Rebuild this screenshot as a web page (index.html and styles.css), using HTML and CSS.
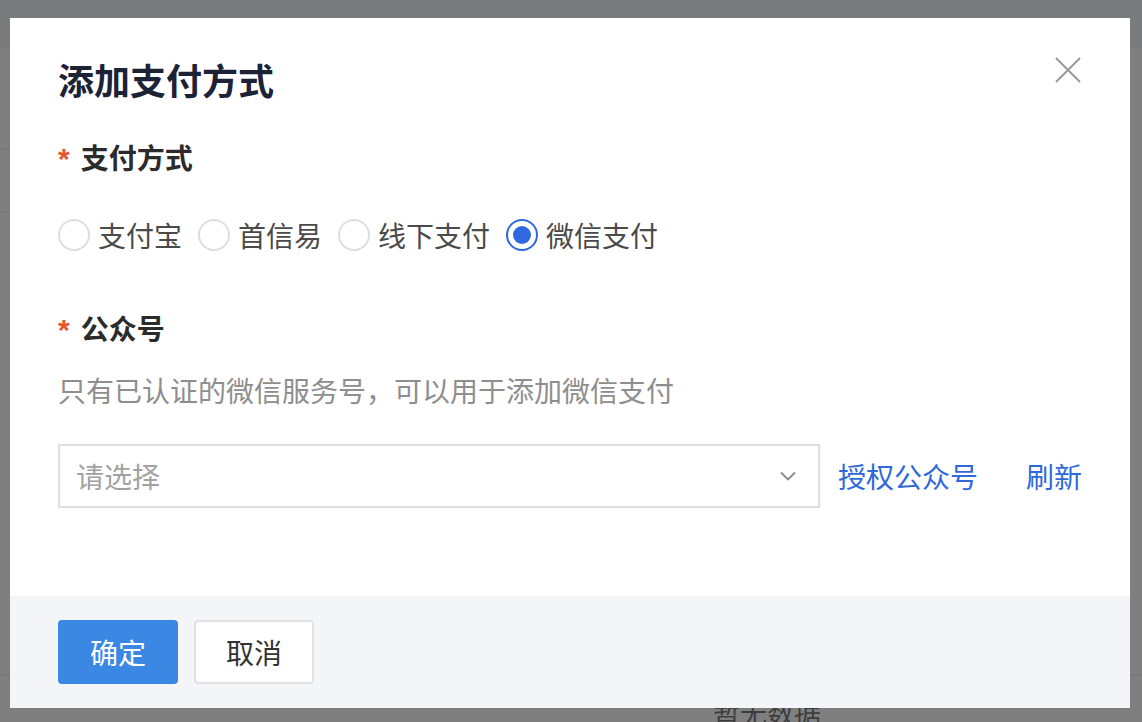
FILE: index.html
```html
<!DOCTYPE html>
<html lang="zh-CN">
<head>
<meta charset="utf-8">
<title>添加支付方式</title>
<link rel="stylesheet" href="styles.css">
</head>
<body>
<div class="page">
  <div class="page-header"></div>
  <div class="page-side">
    <div class="side-row"></div>
    <div class="side-row"></div>
  </div>
  <div class="page-empty">暂无数据</div>
  <div class="page-line"></div>
</div>
<div class="overlay"></div>
<div class="modal">
  <button class="close" aria-label="关闭">
    <svg width="26" height="26" viewBox="0 0 26 26"><path d="M1 1 L25 25 M25 1 L1 25" stroke="#9a9a9a" stroke-width="2" fill="none"/></svg>
  </button>
  <div class="modal-body">
    <h1 class="title">添加支付方式</h1>
    <div class="label label-first"><span class="req">*</span>支付方式</div>
    <div class="radios">
      <label class="radio"><span class="dot"></span>支付宝</label>
      <label class="radio"><span class="dot"></span>首信易</label>
      <label class="radio"><span class="dot"></span>线下支付</label>
      <label class="radio checked"><span class="dot"></span>微信支付</label>
    </div>
    <div class="label label-second"><span class="req">*</span>公众号</div>
    <div class="hint">只有已认证的微信服务号，可以用于添加微信支付</div>
    <div class="select-row">
      <div class="select">
        <span class="placeholder">请选择</span>
        <svg class="chev" width="16" height="10" viewBox="0 0 16 10"><path d="M1 1.5 L8 8.5 L15 1.5" stroke="#8a8a8a" stroke-width="1.8" fill="none"/></svg>
      </div>
      <a class="link link-auth">授权公众号</a>
      <a class="link link-refresh">刷新</a>
    </div>
  </div>
  <div class="modal-footer">
    <button class="btn btn-primary">确定</button>
    <button class="btn btn-default">取消</button>
  </div>
</div>
</body>
</html>
```
FILE: styles.css
```css
* { box-sizing: border-box; }
html, body {
  margin: 0;
  padding: 0;
  width: 1142px;
  height: 722px;
  overflow: hidden;
  font-family: "Noto Sans CJK SC", "Noto Sans", sans-serif;
}
.page {
  position: relative;
  width: 1142px;
  height: 722px;
  background: #ffffff;
}
.page-header {
  height: 48px;
  background: #f4f6fa;
}
.page-side {
  width: 200px;
  padding-top: 100px;
}
.side-row {
  height: 63px;
  border-top: 2px solid #f0f0f0;
}
.page-empty {
  position: absolute;
  left: 713px;
  top: 693px;
  font-size: 27px;
  line-height: 40px;
  color: #7a7a7a;
}
.page-line {
  position: absolute;
  left: 0;
  right: 0;
  top: 674px;
  border-top: 2px solid #f0f0f0;
}
.overlay {
  position: absolute;
  inset: 0;
  background: rgba(0, 0, 0, 0.5);
}
.modal {
  position: absolute;
  left: 10px;
  top: 18px;
  width: 1120px;
  height: 690px;
  background: #ffffff;
  display: flex;
  flex-direction: column;
}
.close {
  position: absolute;
  top: 39px;
  right: 49px;
  width: 26px;
  height: 26px;
  padding: 0;
  border: 0;
  background: none;
  display: flex;
}
.modal-body {
  flex: 1;
  padding: 36px 48px 0 48px;
}
.title {
  margin: 0;
  font-size: 36px;
  line-height: 50px;
  font-weight: 600;
  color: #1c2336;
}
.label {
  display: flex;
  align-items: center;
  font-size: 28px;
  line-height: 40px;
  font-weight: 600;
  color: #2b2b2b;
}
.label-first { margin-top: 33px; }
.label-second { margin-top: 53px; }
.req {
  color: #e8542c;
  font-family: "Liberation Sans", sans-serif;
  font-size: 30px;
  font-weight: 700;
  margin-right: 11px;
  position: relative;
  top: 2px;
}
.radios {
  margin-top: 38px;
  display: flex;
  align-items: center;
  height: 40px;
}
.radio {
  display: flex;
  align-items: center;
  gap: 8px;
  margin-right: 16px;
  font-size: 28px;
  line-height: 40px;
  color: #4a4a4a;
}
.dot {
  width: 32px;
  height: 32px;
  border-radius: 50%;
  border: 2px solid #dcdde1;
  background: #fff;
  display: flex;
  align-items: center;
  justify-content: center;
}
.radio.checked .dot {
  border-color: #2f68df;
}
.radio.checked .dot::after {
  content: "";
  width: 18px;
  height: 18px;
  border-radius: 50%;
  background: #2f68df;
}
.hint {
  margin-top: 22px;
  font-size: 28px;
  line-height: 40px;
  color: #8e8e8e;
}
.select-row {
  margin-top: 34px;
  display: flex;
  align-items: center;
}
.select {
  width: 762px;
  height: 64px;
  border: 2px solid #dcdee2;
  display: flex;
  align-items: center;
  justify-content: space-between;
  padding: 0 22px 0 16px;
}
.placeholder {
  font-size: 28px;
  line-height: 40px;
  color: #a2a2a2;
}
.link {
  font-size: 28px;
  line-height: 40px;
  color: #2f68d8;
  cursor: pointer;
}
.link-auth { margin-left: 18px; }
.link-refresh { margin-left: 48px; }
.modal-footer {
  height: 112px;
  background: #f4f5f9;
  padding: 24px 48px 0 48px;
  display: flex;
  align-items: flex-start;
  gap: 16px;
}
.btn {
  width: 120px;
  height: 64px;
  border-radius: 4px;
  font-family: inherit;
  font-size: 28px;
  line-height: 40px;
  padding: 0;
}
.btn-primary {
  background: #3b88e4;
  border: 0;
  color: #ffffff;
}
.btn-default {
  background: #ffffff;
  border: 2px solid #e2e2e2;
  color: #333333;
}
```
